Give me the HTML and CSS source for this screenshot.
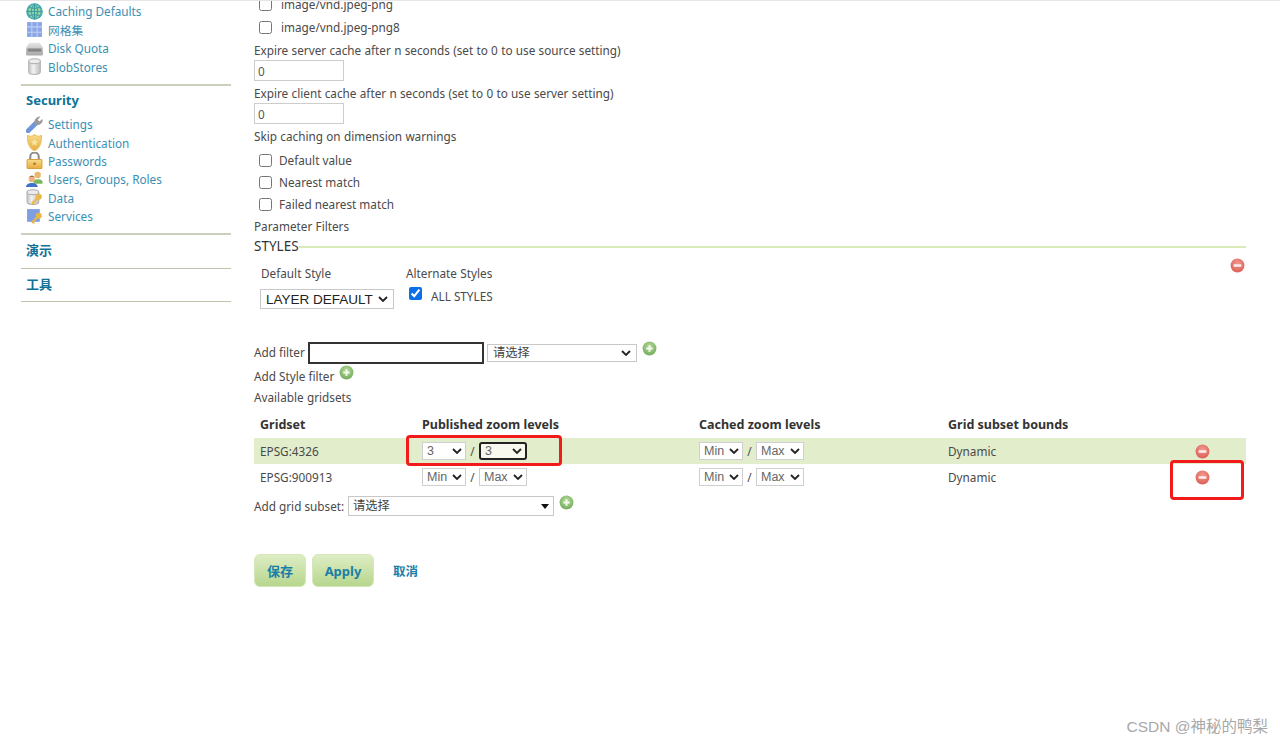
FILE: index.html
```html
<!DOCTYPE html>
<html lang="zh">
<head>
<meta charset="utf-8">
<title>GeoWebCache Layer</title>
<link rel="stylesheet" href="styles.css">
</head>
<body>
<svg class="defs" aria-hidden="true">
  <defs>
    <radialGradient id="gPlus" cx="50%" cy="35%" r="65%"><stop offset="0" stop-color="#b5d99a"/><stop offset="1" stop-color="#74ad5c"/></radialGradient>
    <radialGradient id="gMinus" cx="50%" cy="35%" r="65%"><stop offset="0" stop-color="#f19a90"/><stop offset="1" stop-color="#dc5f55"/></radialGradient>
    <linearGradient id="gCyl" x1="0" x2="1" y1="0" y2="0"><stop offset="0" stop-color="#c4c4c4"/><stop offset=".4" stop-color="#f2f2f2"/><stop offset="1" stop-color="#bdbdbd"/></linearGradient>
    <linearGradient id="gGold" x1="0" x2="0" y1="0" y2="1"><stop offset="0" stop-color="#f8dc8a"/><stop offset="1" stop-color="#e8ab3e"/></linearGradient>
    <linearGradient id="gDisk" x1="0" x2="0" y1="0" y2="1"><stop offset="0" stop-color="#e6e6e6"/><stop offset="1" stop-color="#a8a8a8"/></linearGradient>
    <symbol id="plus" viewBox="0 0 16 16"><circle cx="8" cy="8" r="7.4" fill="url(#gPlus)"/><path d="M8 4.500v7M4.500 8h7" stroke="#f4f9ef" stroke-width="2.200"/></symbol>
    <symbol id="minus" viewBox="0 0 16 16"><circle cx="8" cy="8" r="7.400" fill="url(#gMinus)"/><rect x="3.800" y="6.700" width="8.400" height="2.600" rx=".6" fill="#fbeeee"/></symbol>
    <symbol id="key" viewBox="0 0 16 16"><circle cx="11.500" cy="6" r="3.200" fill="#e9b84a"/><path d="M9.500 8 4 13.500" stroke="#e9b84a" stroke-width="2.400"/><path d="M5 12.500l1.800 1.800" stroke="#e9b84a" stroke-width="1.600"/></symbol>
  </defs>
</svg>

<div class="topline"></div>

<div class="page">
  <nav class="sidebar">
    <ul class="menu menu-first">
      <li><svg class="ico" viewBox="0 0 16 16"><circle cx="8" cy="8" r="7.800" fill="#45aab0"/><ellipse cx="8" cy="8" rx="5.800" ry="6.600" fill="#8fd0a4"/><path d="M8 .5v15M.5 8h15M2.500 3.500c3 2 8 2 11 0M2.500 12.500c3-2 8-2 11 0M8 1C4 5 4 11 8 15M8 1c4 4 4 10 0 14" stroke="#2f94a4" stroke-width=".8" fill="none"/></svg><a>Caching Defaults</a></li>
      <li><svg class="ico" viewBox="0 0 16 16"><rect x="1" y="1" width="14" height="14" fill="#8aa6e6"/><path d="M5.500 1v14M10.500 1v14M1 5.500h14M1 10.500h14" stroke="#c0d0f2"/></svg><a>网格集</a></li>
      <li><svg class="ico" viewBox="0 0 16 16"><path d="M3 2.500h10l3 5v6a1 1 0 0 1-1 1H1a1 1 0 0 1-1-1v-6z" fill="url(#gDisk)"/><rect x="1.500" y="8" width="13" height="3" fill="#868686"/></svg><a>Disk Quota</a></li>
      <li><svg class="ico" viewBox="0 0 16 16"><path d="M2.500 3v10c0 1.500 2.500 2.500 5.500 2.500s5.500-1 5.500-2.500V3z" fill="url(#gCyl)" stroke="#b5b5b5"/><ellipse cx="8" cy="3" rx="5.500" ry="2.300" fill="#ececec" stroke="#b5b5b5"/></svg><a>BlobStores</a></li>
    </ul>
    <h3 class="menu-title menu-title-security">Security</h3>
    <ul class="menu menu-security">
      <li><svg class="ico" viewBox="0 0 16 16"><path d="M2 14 9 7" stroke="#6f96dc" stroke-width="4.500" stroke-linecap="round"/><path d="M8.500 8c-1.500-3 0-6.500 4-7.500l1 .3-2.500 2.700 1.700 1.700 2.600-2.400.5 1c-.5 3.500-3.800 5.500-6.300 4.700z" fill="#9a9a9a"/></svg><a>Settings</a></li>
      <li><svg class="ico" viewBox="0 0 16 16"><path d="M1.500 1.500c2 .8 4.500.8 6.500-1 2 1.800 4.500 1.800 6.500 1 .5 6-1.500 11.500-6.500 14.500C3 13 1 7.500 1.500 1.500z" fill="url(#gGold)" stroke="#e6c263"/><path d="M8 4.500l1 2.300 2.400.2-1.800 1.600.6 2.400L8 9.700 5.800 11l.6-2.400L4.600 7l2.400-.2z" fill="#f6e7a5"/></svg><a>Authentication</a></li>
      <li><svg class="ico" viewBox="0 0 16 16"><path d="M4 8V4.500a4 4 0 0 1 8 0V8" fill="none" stroke="#8f8f8f" stroke-width="2"/><rect x="1" y="7" width="14" height="8.500" rx="1" fill="url(#gGold)" stroke="#d89f3e"/><circle cx="8" cy="11" r="1.200" fill="#a4722a"/></svg><a>Passwords</a></li>
      <li><svg class="ico" viewBox="0 0 16 16"><circle cx="11" cy="3.800" r="3" fill="#e8b871"/><path d="M7 10c0-3 8-3 8.500 0v2H7z" fill="#79b85a"/><circle cx="5.500" cy="7.500" r="3" fill="#eab583"/><path d="M0 15c0-5 11-5 11 0z" fill="#3f74c8"/><path d="M3 5.500c1-1.500 4-1.500 5 0z" fill="#a5542a"/></svg><a>Users, Groups, Roles</a></li>
      <li><svg class="ico" viewBox="0 0 16 16"><path d="M1 3v9c0 1.500 2.500 2.500 5.500 2.500S12 13.500 12 12V3z" fill="url(#gCyl)" stroke="#b0b0b0"/><ellipse cx="6.500" cy="3" rx="5.500" ry="2.300" fill="#ececec" stroke="#b0b0b0"/><use href="#key" x="2" y="2" width="14" height="14"/></svg><a>Data</a></li>
      <li><svg class="ico" viewBox="0 0 16 16"><rect x="1" y="1" width="12" height="12" fill="#7f9fe2"/><use href="#key" x="2" y="2" width="14" height="14"/></svg><a>Services</a></li>
    </ul>
    <h3 class="menu-title menu-title-fold">演示</h3>
    <h3 class="menu-title menu-title-fold">工具</h3>
  </nav>

  <main class="content">
    <label class="check check-first"><input type="checkbox"><span>image/vnd.jpeg-png</span></label>
    <label class="check check-second"><input type="checkbox"><span>image/vnd.jpeg-png8</span></label>

    <div class="field-label">Expire server cache after n seconds (set to 0 to use source setting)</div>
    <input class="text-input" type="text" value="0">
    <div class="field-label field-label-gap">Expire client cache after n seconds (set to 0 to use server setting)</div>
    <input class="text-input" type="text" value="0">
    <div class="field-label field-label-gap">Skip caching on dimension warnings</div>

    <div class="check-group">
      <label class="check check-tight"><input type="checkbox"><span>Default value</span></label>
      <label class="check check-tight"><input type="checkbox"><span>Nearest match</span></label>
      <label class="check check-tight"><input type="checkbox"><span>Failed nearest match</span></label>
    </div>

    <div class="field-label">Parameter Filters</div>
    <div class="legend"><span class="legend-text">STYLES</span><span class="legend-line"></span></div>

    <section class="styles-box">
      <div class="style-col style-col-default">
        <div class="field-label">Default Style</div>
        <select class="select-large"><option>LAYER DEFAULT</option></select>
      </div>
      <div class="style-col">
        <div class="field-label">Alternate Styles</div>
        <label class="check check-all"><input type="checkbox" checked><span>ALL STYLES</span></label>
      </div>
      <svg class="btn-ico remove-style"><use href="#minus"/></svg>
    </section>

    <div class="add-filter">
      <span class="label-filter">Add filter</span>
      <input class="filter-input" type="text">
      <select class="select-filter"><option>请选择</option></select>
      <svg class="btn-ico plus-filter"><use href="#plus"/></svg>
    </div>
    <div class="add-style"><span class="label-style">Add Style filter</span><svg class="btn-ico plus-style"><use href="#plus"/></svg></div>
    <div class="field-label">Available gridsets</div>

    <table class="grid-table">
      <colgroup><col class="c1"><col class="c2"><col class="c3"><col class="c4"><col class="c5"></colgroup>
      <thead>
        <tr><th>Gridset</th><th>Published zoom levels</th><th>Cached zoom levels</th><th>Grid subset bounds</th><th></th></tr>
      </thead>
      <tbody>
        <tr class="row-odd">
          <td>EPSG:4326</td>
          <td><div class="zoom-pair"><select class="zoom zoom-a"><option>3</option></select><i>/</i><select class="zoom zoom-b zoom-focus"><option>3</option></select></div></td>
          <td><div class="zoom-pair"><select class="zoom zoom-a"><option>Min</option></select><i>/</i><select class="zoom zoom-b"><option>Max</option></select></div></td>
          <td>Dynamic</td>
          <td><svg class="btn-ico"><use href="#minus"/></svg></td>
        </tr>
        <tr>
          <td>EPSG:900913</td>
          <td><div class="zoom-pair"><select class="zoom zoom-a"><option>Min</option></select><i>/</i><select class="zoom zoom-b"><option>Max</option></select></div></td>
          <td><div class="zoom-pair"><select class="zoom zoom-a"><option>Min</option></select><i>/</i><select class="zoom zoom-b"><option>Max</option></select></div></td>
          <td>Dynamic</td>
          <td><svg class="btn-ico"><use href="#minus"/></svg></td>
        </tr>
      </tbody>
    </table>

    <div class="add-grid">
      <span class="label-grid">Add grid subset:</span>
      <span class="select-wrap"><select class="select-grid"><option>请选择</option></select></span>
      <svg class="btn-ico plus-grid"><use href="#plus"/></svg>
    </div>

    <div class="actions">
      <a class="btn btn-save">保存</a>
      <a class="btn btn-apply">Apply</a>
      <a class="cancel">取消</a>
    </div>
  </main>
</div>

<div class="mark mark-zoom"></div>
<div class="mark mark-remove"></div>
<div class="watermark">CSDN @神秘的鸭梨</div>
</body>
</html>
```
FILE: styles.css
```css
* { box-sizing: border-box; }
html, body { margin: 0; padding: 0; height: 742px; overflow: hidden; background: #fff; }
body {
  position: relative;
  font-family: "Noto Sans", "Noto Sans CJK SC", sans-serif;
  font-size: 11.750px;
  line-height: 20px;
  color: #4a4a4a;
}
.defs { position: absolute; width: 0; height: 0; }
.topline { height: 1px; background: #e6e6e6; position: absolute; top: 0; left: 0; right: 0; z-index: 2; }
.page { display: flex; padding-left: 21px; }

/* Sidebar */
.sidebar { width: 210px; flex: none; color: #2f8cb0; }
.menu { list-style: none; margin: 0; padding: 0 0 0 5px; }
.menu-first { margin-top: 2px; height: 84px; border-bottom: 2px solid #c9d0bc; }
.menu li { display: flex; align-items: center; height: 18.500px; gap: 5px; }
.menu-security li { height: 18.400px; }
.menu a { color: #3b8fb3; }
.ico { width: 17px; height: 17px; flex: none; }
.menu-title { margin: 0; padding-left: 5px; font-size: 13px; font-weight: 700; color: #0f7299; }
.menu-title-security { height: 29px; line-height: 28px; }
.menu-security { height: 120px; border-bottom: 2px solid #c9d0bc; }
.menu-title-fold { height: 33.500px; line-height: 31px; border-bottom: 1px solid #bcc6ac; }

/* Content */
.content { width: 992px; flex: none; margin-left: 23px; margin-top: -7px; position: relative; }
.check { display: flex; align-items: center; white-space: nowrap; }
.check input { width: 13px; height: 13px; margin: 0 9px 0 5px; flex: none; accent-color: #0a6fe8; }
.check-first { height: 22px; }
.check-second { height: 24px; }
.check-tight { height: 22px; }
.check-tight input { margin-right: 7px; }
.check-group { margin-top: 3px; margin-bottom: 1px; }
.field-label { height: 20px; line-height: 21px; white-space: nowrap; word-spacing: .25px; }
.field-label-gap { margin-top: 2px; }
.check-second + .field-label { margin-top: 1px; }
.text-input {
  display: block; width: 90px; height: 21px; padding: 0 3px;
  border: 1px solid #cdcdcd; font: inherit; color: #555; background: #fff; border-radius: 0;
}
.legend { display: flex; align-items: center; height: 20px; }
.legend-text { font-size: 13.500px; color: #333; }
.legend-line { flex: 1; height: 2px; background: #d9ebbb; margin-top: 2px; }

.styles-box { display: flex; height: 85px; padding: 7px 0 0 7px; position: relative; }
.style-col-default { width: 145px; }
select {
  appearance: none; -webkit-appearance: none; border-radius: 0; background-color: #fff;
  background-repeat: no-repeat;
  background-image: url("data:image/svg+xml,%3Csvg xmlns='http://www.w3.org/2000/svg' width='10' height='6'%3E%3Cpath d='M1 1l4 4 4-4' fill='none' stroke='%23222' stroke-width='1.800'/%3E%3C/svg%3E");
}
.select-large {
  display: block; width: 134px; height: 20px; margin: 6px 0 0 -1px; padding: 0 0 0 5px;
  font: 13.500px "Liberation Sans", sans-serif; color: #222;
  border: 1px solid #c8c8c8; background-position: right 5px center;
}
.check-all { margin-top: 2px; height: 20px; }
.check-all input { margin: 0 9px 0 3px; position: relative; top: -2px; }
.check-all span { position: relative; top: 1px; }
.remove-style { position: absolute; right: 1px; top: 2px; }

.btn-ico { width: 15px; height: 15px; display: block; flex: none; }
.add-filter { display: flex; align-items: center; height: 24px; white-space: nowrap; }
.label-filter { width: 50px; flex: none; padding-bottom: 2px; }
.filter-input { width: 176px; height: 22px; margin-left: 4px; border: 2px solid #333; background: #fff; }
.select-filter {
  width: 150px; height: 18px; margin-left: 3px; padding: 0 0 0 5px;
  font: 12.300px/14px "Liberation Sans", "Noto Sans CJK SC", sans-serif; color: #444;
  border: 1px solid #c8c8c8; background-position: right 5px center;
}
.plus-filter { margin: -9px 0 0 5px; }
.add-style { display: flex; align-items: center; height: 22px; white-space: nowrap; }
.label-style { width: 80px; flex: none; }
.plus-style { margin: -8px 0 0 5px; }

.grid-table { width: 992px; table-layout: fixed; border-collapse: collapse; margin-top: 2px; }
.c1 { width: 162px; } .c2 { width: 277px; } .c3 { width: 249px; } .c4 { width: 247px; } .c5 { width: 57px; }
.grid-table th { height: 29px; padding: 2px 0 0 6px; text-align: left; font-size: 12.500px; font-weight: 700; color: #333; vertical-align: middle; }
.grid-table td { height: 26px; padding: 0 0 0 6px; vertical-align: middle; white-space: nowrap; }
.row-odd td { background: #e2eecb; }
.zoom-pair { display: flex; align-items: center; }
.zoom-pair i { font-style: normal; width: 13px; text-align: center; }
.zoom {
  height: 18px; padding: 0 0 0 4px; font: 12.500px "Liberation Sans", sans-serif; color: #666;
  border: 1px solid #cfcfcf; background-position: right 3px center;
}
.zoom-a { width: 44px; }
.zoom-b { width: 48px; }
.zoom-focus { border: 2px solid #222; border-radius: 3px; background-color: #f8f8ee; }

.add-grid { display: flex; align-items: center; height: 24px; margin-top: 4px; white-space: nowrap; }
.label-grid { width: 90px; flex: none; }
.select-wrap { position: relative; margin-left: 4px; display: block; }
.select-wrap::after {
  content: ""; position: absolute; right: 5px; top: 8px; pointer-events: none;
  border: 4px solid transparent; border-top: 5px solid #111; border-bottom: 0;
}
.select-grid {
  display: block; width: 206px; height: 20px; padding: 0 0 0 4px; background-image: none;
  font: 12.300px/14px "Liberation Sans", "Noto Sans CJK SC", sans-serif; color: #444;
  border: 1px solid #c8c8c8;
}
.plus-grid { margin: -7px 0 0 5px; }

.actions { display: flex; align-items: center; margin-top: 36px; }
.btn {
  display: flex; align-items: center; justify-content: center; height: 33px;
  font-size: 13px; font-weight: 700; color: #1c7ea6;
  border: 1px solid #d5e6b8; border-radius: 6px;
  background: linear-gradient(#deedc4, #b6d68d);
}
.btn-save { width: 52px; }
.btn-apply { width: 62px; margin-left: 6px; }
.cancel { margin-left: 19px; font-size: 12.500px; font-weight: 700; color: #1c7ea6; padding-top: 2px; }

/* Annotations over the screenshot */
.mark { position: absolute; border: 3px solid #f21a1a; border-radius: 4px; }
.mark-zoom { left: 406px; top: 435px; width: 156px; height: 31px; }
.mark-remove { left: 1170px; top: 460px; width: 74px; height: 40px; }
.watermark {
  position: absolute; right: 12px; top: 716px; font-size: 15.500px; line-height: 22px;
  color: #a8a8a8; font-family: "Liberation Sans", "Noto Sans CJK SC", sans-serif;
}
```
